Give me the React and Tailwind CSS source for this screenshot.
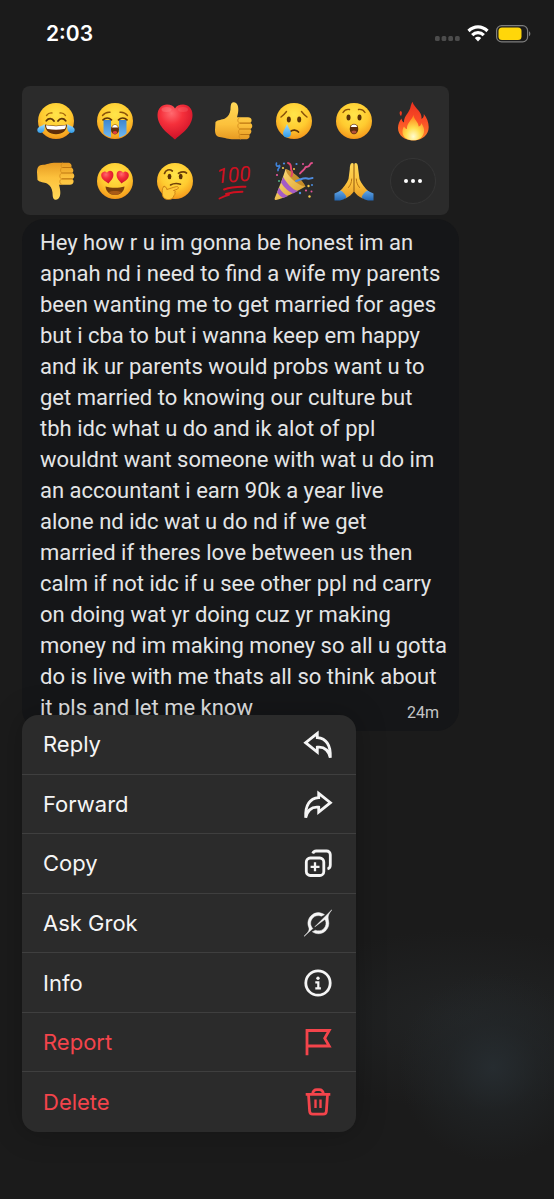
// App.jsx
const MESSAGE_LINES = [
  'Hey how r u im gonna be honest im an',
  'apnah nd i need to find a wife my parents',
  'been wanting me to get married for ages',
  'but i cba to but i wanna keep em happy',
  'and ik ur parents would probs want u to',
  'get married to knowing our culture but',
  'tbh idc what u do and ik alot of ppl',
  'wouldnt want someone with wat u do im',
  'an accountant i earn 90k a year live',
  'alone nd idc wat u do nd if we get',
  'married if theres love between us then',
  'calm if not idc if u see other ppl nd carry',
  'on doing wat yr doing cuz yr making',
  'money nd im making money so all u gotta',
  'do is live with me thats all so think about',
  'it pls and let me know',
];

// Gradients shared by every emoji drawing
function EmojiDefs() {
  return (
    <svg width="0" height="0" className="absolute" aria-hidden="true">
      <defs>
        <radialGradient id="face" cx="0.5" cy="0.32" r="0.72">
          <stop offset="0" stopColor="#ffe54a" />
          <stop offset="0.55" stopColor="#ffcb30" />
          <stop offset="0.88" stopColor="#f6a01f" />
          <stop offset="1" stopColor="#e8860f" />
        </radialGradient>
        <linearGradient id="tear" x1="0" y1="0" x2="0" y2="1">
          <stop offset="0" stopColor="#9fdcff" />
          <stop offset="1" stopColor="#2f9be8" />
        </linearGradient>
        <linearGradient id="stream" x1="0" y1="0" x2="0" y2="1">
          <stop offset="0" stopColor="#3f86cf" />
          <stop offset="1" stopColor="#6fb9f2" />
        </linearGradient>
        <radialGradient id="heart" cx="0.4" cy="0.25" r="0.8">
          <stop offset="0" stopColor="#ff6a6f" />
          <stop offset="0.4" stopColor="#f5303b" />
          <stop offset="1" stopColor="#c90d25" />
        </radialGradient>
        <linearGradient id="hand" x1="0" y1="0" x2="0" y2="1">
          <stop offset="0" stopColor="#ffd858" />
          <stop offset="0.6" stopColor="#fcc13c" />
          <stop offset="1" stopColor="#e69a22" />
        </linearGradient>
        <linearGradient id="flame" x1="0" y1="0" x2="0" y2="1">
          <stop offset="0" stopColor="#e8301f" />
          <stop offset="0.5" stopColor="#fb4d26" />
          <stop offset="1" stopColor="#ff8a2b" />
        </linearGradient>
        <radialGradient id="flameCore" cx="0.5" cy="0.85" r="0.75">
          <stop offset="0" stopColor="#fffbd0" />
          <stop offset="0.45" stopColor="#ffdf4f" />
          <stop offset="1" stopColor="#ff8c22" />
        </radialGradient>
        <linearGradient id="cone" x1="0" y1="0" x2="1" y2="1">
          <stop offset="0" stopColor="#ffe384" />
          <stop offset="1" stopColor="#d99a23" />
        </linearGradient>
        <linearGradient id="sleeve" x1="0" y1="0" x2="0" y2="1">
          <stop offset="0" stopColor="#63a7e8" />
          <stop offset="1" stopColor="#2468b4" />
        </linearGradient>
      </defs>
    </svg>
  );
}

function Emoji({ children }) {
  return (
    <svg viewBox="0 0 40 40" className="w-10 h-10 overflow-visible" fill="none" strokeLinecap="round" strokeLinejoin="round" aria-hidden="true">
      {children}
    </svg>
  );
}

const Face = () => <circle cx="20" cy="20" r="18" fill="url(#face)" />;

const HEART = 'M20 38.500C14 33 2.500 26 2.500 14C2.500 7.500 7 3.500 12 3.500C15.700 3.500 18.700 5 20 7.500C21.300 5 24.300 3.500 28 3.500C33 3.500 37.500 7.500 37.500 14C37.500 26 26 33 20 38.500Z';

function Joy() {
  return (
    <Emoji>
      <Face />
      <path d="M10.500 14.500C12 12.500 14 11.700 16 12M29.500 14.500C28 12.500 26 11.700 24 12" stroke="#a8690c" strokeWidth="1.300" />
      <path d="M10.300 19.800C12.500 17 16 17 18 20M29.700 19.800C27.500 17 24 17 22 20" stroke="#5f3508" strokeWidth="1.800" />
      <path d="M9 23.500C15 25 25 25 31 23.500C31 29.500 26.500 33.300 20 33.300C13.500 33.300 9 29.500 9 23.500Z" fill="#5f2e0b" />
      <path d="M10 24.300C16 25.400 24 25.400 30 24.300C29.800 26.500 29 28 28.300 28C23 29 17 29 11.700 28C11 28 10.200 26.500 10 24.300Z" fill="#fff" />
      <path d="M8.500 23C9.500 28 8 32 4.500 32C1.500 32 0.500 29 2 27C3.500 25 6.500 25 8.500 23Z" fill="url(#tear)" />
      <path d="M31.500 23C30.500 28 32 32 35.500 32C38.500 32 39.500 29 38 27C36.500 25 33.500 25 31.500 23Z" fill="url(#tear)" />
    </Emoji>
  );
}

function Sob() {
  return (
    <Emoji>
      <Face />
      <path d="M8.500 19H16V36.500C13 35.800 10.500 34.300 8.500 32.500Z" fill="url(#stream)" />
      <path d="M31.500 19H24V36.500C27 35.800 29.500 34.300 31.500 32.500Z" fill="url(#stream)" />
      <path d="M7.500 14.500C9.500 12 12 11 15 11.300M32.500 14.500C30.500 12 28 11 25 11.300" stroke="#8a520a" strokeWidth="1.400" />
      <path d="M8 18.800C10.500 16.500 14 16.500 16.500 18.800M32 18.800C29.500 16.500 26 16.500 23.500 18.800" stroke="#5f3508" strokeWidth="1.700" />
      <ellipse cx="20" cy="28.500" rx="4" ry="5" fill="#62300d" />
      <path d="M17 26.500C17.500 24.500 18.700 24 20 24C21.300 24 22.500 24.500 23 26.500Z" fill="#fff" />
      <ellipse cx="20" cy="31.500" rx="2.300" ry="1.500" fill="#df3f3f" />
    </Emoji>
  );
}

function Heart() {
  return (
    <Emoji>
      <path d={HEART} fill="url(#heart)" />
      <ellipse cx="11.500" cy="8.500" rx="5" ry="2.500" fill="#ff9a9a" opacity="0.300" />
      <ellipse cx="28" cy="8.500" rx="5" ry="2.500" fill="#ff9a9a" opacity="0.200" />
    </Emoji>
  );
}

function Thumb() {
  return (
    <>
      <path
        d="M1.500 21C4 18.500 8 19 11 17.500C14.500 15.500 16 12.500 16.500 8.500C16.700 5.500 16.500 1.500 19.500 1.300C23 1 24.500 5 24.300 9C24.200 12 23.500 14.500 23 16.300H34C38.300 16.300 38.500 21.300 36 22C39.300 23 38.800 27.500 36 28C38.300 29.200 37.500 33 35 33.500C36.500 35.500 35 38.300 32 38.300H20C14 38.300 10.500 36.500 7 36.200C3 36 1 34 1 29Z"
        fill="url(#hand)"
      />
      <path d="M26 22.100H36M26 28H36M26 33.500H35" stroke="#bd7611" strokeWidth="1.100" />
      <path d="M26 16.500C23.500 17 22.800 20.500 25.500 22C23 23.500 23.500 27 25.800 28C24 29.500 24.200 32.500 26 33.500C24.500 35 25 37 26.500 38" stroke="#d99220" strokeWidth="1" />
    </>
  );
}

function ThumbsUp() {
  return (
    <Emoji>
      <Thumb />
    </Emoji>
  );
}

function ThumbsDown() {
  return (
    <Emoji>
      <g transform="translate(0 40) scale(1 -1)">
        <Thumb />
      </g>
    </Emoji>
  );
}

function Cry() {
  return (
    <Emoji>
      <Face />
      <path d="M7 16C9 14.500 11 12.500 12.500 10.500M33 16C31 14.500 29 12.500 27.500 10.500" stroke="#8a520a" strokeWidth="1.400" />
      <ellipse cx="14.800" cy="18.500" rx="2" ry="3" fill="#5a3208" />
      <ellipse cx="25.200" cy="18.500" rx="2" ry="3" fill="#5a3208" />
      <path d="M16.500 30.500C18.500 28.500 22.500 28.500 24.500 31" stroke="#5a3208" strokeWidth="1.700" />
      <path d="M13 23C14.500 27 17 29.500 17 32.500C17 35 15.200 36.500 13 36.500C10.800 36.500 9 35 9 32.500C9 29.500 11.500 27 13 23Z" fill="url(#tear)" />
    </Emoji>
  );
}

function Wow() {
  return (
    <Emoji>
      <Face />
      <path d="M9 11.500C10.500 9 13 8 15.500 8.500M31 11.500C29.500 9 27 8 24.500 8.500" stroke="#8a520a" strokeWidth="1.400" />
      <ellipse cx="14.500" cy="16.500" rx="2" ry="3" fill="#5a3208" />
      <ellipse cx="25.500" cy="16.500" rx="2" ry="3" fill="#5a3208" />
      <ellipse cx="20" cy="28" rx="4.300" ry="5.300" fill="#5f2e0b" />
      <path d="M16.900 26C17.300 24 18.500 23.400 20 23.400C21.500 23.400 22.700 24 23.100 26Z" fill="#fff" />
      <ellipse cx="20" cy="31" rx="2.600" ry="1.600" fill="#b0503a" />
    </Emoji>
  );
}

function Fire() {
  return (
    <Emoji>
      <path
        d="M19.500 0.800C20.500 5 25 8 27.500 12.500C28.500 14.500 28.700 16.500 28.500 18C30.500 17 31 15 30.800 13C34 17 35.700 21.500 35.700 26C35.700 34 29 39.500 20.500 39.500C11.500 39.500 5 34.500 5 27C5 23 6.500 20 8.500 17.500C8.800 19.500 9.500 20.700 11 21.500C10.500 15 17 11 17.500 6C18 4 18.500 2.500 19.500 0.800Z"
        fill="url(#flame)"
      />
      <path d="M7.500 10C9.500 10.500 9 13 8 15C6.500 14 6 11 7.500 10Z" fill="#ef3a22" />
      <path
        d="M20.500 14C20.500 18 25.500 21 25.700 25.500C27.500 25 28.300 23.500 28.300 22C30.500 25.500 31.500 28 31 31C30 36.500 26 39.300 20.500 39.300C14.500 39.300 9.800 36.500 9.500 31.500C9.300 29 10 27 11 25.500C11.800 27 12.500 27.700 14 28C13.500 22 19 19 20.500 14Z"
        fill="url(#flameCore)"
      />
    </Emoji>
  );
}

function HeartEyes() {
  return (
    <Emoji>
      <Face />
      <g transform="rotate(-8 12.500 15.500) translate(5.500 9) scale(0.350)">
        <path d={HEART} fill="url(#heart)" />
      </g>
      <g transform="rotate(8 27.500 15.500) translate(20.500 9) scale(0.350)">
        <path d={HEART} fill="url(#heart)" />
      </g>
      <path d="M10.500 25.500C16 27.300 24 27.300 29.500 25.500C29 31 25 34 20 34C15 34 11 31 10.500 25.500Z" fill="#7a400c" />
      <path d="M13.500 31C17 29.500 23 29.500 26.500 31C24.500 33 22.500 34 20 34C17.500 34 15.500 33 13.500 31Z" fill="#a95a16" />
    </Emoji>
  );
}

function Thinking() {
  return (
    <Emoji>
      <Face />
      <path d="M9.500 12.500C10.500 9 14.500 7.500 17.300 10M23.500 12.300C26 11 29.500 10.500 31.500 12" stroke="#70420a" strokeWidth="1.700" />
      <ellipse cx="14.500" cy="15.500" rx="1.900" ry="2.700" fill="#5a3208" />
      <ellipse cx="25.700" cy="15.500" rx="1.900" ry="2.700" fill="#5a3208" />
      <path d="M15.500 24C18 22.500 22.500 22.200 25.500 23.200" stroke="#70420a" strokeWidth="1.500" />
      <path
        d="M9 25.500C10.500 25.300 11.500 26.500 11.800 28.500C14 28 18 26.300 21.500 25.600C23.800 25.300 24 27.500 22 28.300L18.500 29.500C20.500 29.500 20.500 31 19.800 31.500C20.500 33 19.500 34 19 34.500C18.500 37.500 15.500 39 12.500 38.500C8.500 38 7 35 7.300 31.500C7.400 29 7 26 9 25.500Z"
        fill="#ffc93a"
        stroke="#c77d14"
        strokeWidth="0.900"
      />
    </Emoji>
  );
}

function Hundred() {
  return (
    <Emoji>
      <text
        x="20"
        y="21"
        textAnchor="middle"
        fontSize="21"
        fontStyle="italic"
        fill="#cf1020"
        fontFamily="Roboto, sans-serif"
        transform="rotate(-4 20 20)"
      >
        100
      </text>
      <path d="M10 28.500C16 26.300 24 25.500 31.500 25.800M12 33C17 31.500 23 30.800 28.500 30.800M5.500 37.500C9 35.800 12 34.500 15 33.800" stroke="#cf1020" strokeWidth="1.900" />
    </Emoji>
  );
}

function Party() {
  return (
    <Emoji>
      <path d="M11.500 8C18 10 28 18 31.500 25.500C24 30 9 37.500 2 39C0.500 39.300 0.300 38 1 36.500C4.500 28 9 17 11.500 8Z" fill="url(#cone)" />
      <path d="M9.300 16C12 21.500 18.500 29 24 30L19 32.500C14 30.500 9.500 25.500 7 21.500ZM5 26.500C7.500 30.500 11 34 14 35L9.500 37C7 36 4.500 33.500 3 31.500Z" fill="#a45cc5" />
      <path d="M11.500 8C18 10 28 18 31.500 25.500C24 25 12.500 14.500 11.500 8Z" fill="#b87a1c" opacity="0.700" />
      <path d="M14 2C19 3 15.500 8 18 10.500C19 12 17.500 14 17.500 15" stroke="#e2456b" strokeWidth="2" />
      <path d="M26 12.500C28.500 9 30.500 9 31 7C31.500 5 34 6.500 35 5C36.500 3.500 36 2 38 2" stroke="#e0508a" strokeWidth="1.900" />
      <path d="M22 20C27 18.500 30 16 33.500 17.500C35.500 18.300 37 17 38.500 17" stroke="#4f8de0" strokeWidth="2" />
      <path d="M2.500 2C1.500 5 3.500 6 5.500 4.500C7 7 3 7 4 9.500" stroke="#3f82d8" strokeWidth="1.700" />
      <g fill="#f2c94c">
        <circle cx="9" cy="7" r="1.100" />
        <circle cx="20" cy="8" r="1" />
        <circle cx="34.500" cy="25" r="1.200" />
        <circle cx="35.500" cy="35.500" r="1.200" />
      </g>
      <g fill="#4b8fe2">
        <circle cx="10" cy="2.500" r="1.100" />
        <circle cx="22.500" cy="3" r="1.100" />
        <circle cx="26" cy="32" r="1.200" />
        <circle cx="38" cy="24" r="1" />
      </g>
      <g fill="#e5549a">
        <circle cx="3" cy="14" r="1.100" />
        <circle cx="32" cy="29.500" r="1.100" />
        <circle cx="29" cy="3" r="1" />
        <circle cx="37.500" cy="30.500" r="1" />
      </g>
      <circle cx="5" cy="20" r="1" fill="#52b788" />
    </Emoji>
  );
}

function Pray() {
  return (
    <Emoji>
      <path d="M18.300 2C16.300 2 16 5 15.800 8L14.500 18C13 22 9 27 5.500 30.500L11.500 37.500C15 35.500 18 33.500 19.800 30.500V4C19.800 2.700 19.300 2 18.300 2Z" fill="url(#hand)" />
      <path d="M21.700 2C23.700 2 24 5 24.200 8L25.500 18C27 22 31 27 34.500 30.500L28.500 37.500C25 35.500 22 33.500 20.200 30.500V4C20.200 2.700 20.700 2 21.700 2Z" fill="url(#hand)" />
      <path d="M20 3.500V30.500M17.700 18C17.500 22 16.500 24 14.500 26.500M22.300 18C22.500 22 23.500 24 25.500 26.500" stroke="#b87414" strokeWidth="1" />
      <path d="M0.500 32.500C3 31.500 5 30.500 6.500 29.500C9.500 31 11.500 33.500 12.500 36.500C10.500 38 8 39 6 39.500H0.500Z" fill="url(#sleeve)" />
      <path d="M39.500 32.500C37 31.500 35 30.500 33.500 29.500C30.500 31 28.500 33.500 27.500 36.500C29.500 38 32 39 34 39.500H39.500Z" fill="url(#sleeve)" />
    </Emoji>
  );
}

const REACTIONS = [
  { label: 'Tears of joy', Icon: Joy },
  { label: 'Crying loudly', Icon: Sob },
  { label: 'Heart', Icon: Heart },
  { label: 'Thumbs up', Icon: ThumbsUp },
  { label: 'Crying', Icon: Cry },
  { label: 'Surprised', Icon: Wow },
  { label: 'Fire', Icon: Fire },
  { label: 'Thumbs down', Icon: ThumbsDown },
  { label: 'Heart eyes', Icon: HeartEyes },
  { label: 'Thinking', Icon: Thinking },
  { label: 'Hundred', Icon: Hundred },
  { label: 'Party', Icon: Party },
  { label: 'Folded hands', Icon: Pray },
];

function MenuIcon({ children }) {
  return (
    <svg viewBox="0 0 32 32" className="w-8 h-8" fill="none" stroke="currentColor" strokeWidth="2.800" aria-hidden="true">
      {children}
    </svg>
  );
}

const ARROW = 'M15.300 5.300L3.600 14.700L15.300 24V19.200C21.500 18.500 26.300 21 28.300 29.800C28.800 18 24.500 10.500 15.300 9.700Z';

const ReplyIcon = () => (
  <MenuIcon>
    <path d={ARROW} />
  </MenuIcon>
);

const ForwardIcon = () => (
  <MenuIcon>
    <path d={ARROW} transform="translate(32 0) scale(-1 1)" />
  </MenuIcon>
);

const CopyIcon = () => (
  <MenuIcon>
    <rect x="4.300" y="11" width="17.500" height="17.500" rx="4" />
    <path d="M10.800 6.500C11.300 4.800 12.600 4 14.300 4H24.500C26.700 4 28.300 5.600 28.300 7.800V18C28.300 20 27.300 21.500 25.500 22" />
    <path d="M13 15.300V24.200M8.600 19.800H17.500" strokeWidth="2.300" />
  </MenuIcon>
);

const GrokIcon = () => (
  <svg viewBox="0 0 24 24" className="w-7 h-7 mx-[2px]" fill="currentColor" stroke="currentColor" strokeWidth="0.400" aria-hidden="true">
    <path d="M9.270 15.290l7.978-5.897c.391-.29.95-.177 1.137.272.98 2.369.542 5.215-1.410 7.169-1.951 1.954-4.667 2.382-7.149 1.406l-2.711 1.257c3.889 2.661 8.611 2.003 11.562-.953 2.341-2.344 3.066-5.539 2.388-8.420l.006.007c-.983-4.232.242-5.924 2.750-9.383.060-.082.120-.164.179-.248l-3.301 3.305v-.010L9.267 15.292M7.623 16.723c-2.792-2.670-2.310-6.801.071-9.184 1.761-1.763 4.647-2.483 7.166-1.425l2.705-1.250a7.808 7.808 0 00-1.829-1A8.975 8.975 0 005.984 5.830c-2.533 2.536-3.330 6.436-1.962 9.764 1.022 2.487-.653 4.246-2.340 6.022-.599.630-1.199 1.259-1.682 1.925l7.620-6.815" />
  </svg>
);

const InfoIcon = () => (
  <MenuIcon>
    <circle cx="16" cy="16" r="12.200" />
    <circle cx="16" cy="11.300" r="1.700" fill="currentColor" stroke="none" />
    <path d="M13.300 15.300H16.300V21.300M13.300 21.300H18.900" strokeWidth="2.200" />
  </MenuIcon>
);

const FlagIcon = () => (
  <MenuIcon>
    <path d="M5 29.300V4.500H27.200L22.700 12.300L27.200 20H5" />
  </MenuIcon>
);

const TrashIcon = () => (
  <MenuIcon>
    <path d="M3.700 8.300H28.300M10.600 8C11 5 12.500 3.700 14.800 3.700H17.200C19.500 3.700 21 5 21.400 8" />
    <path d="M6.500 8.500L7.600 25C7.700 27 9 28.200 10.900 28.200H21.100C23 28.200 24.300 27 24.400 25L25.500 8.500" />
    <path d="M13.500 13.500V22M18.500 13.500V22" strokeWidth="2.400" />
  </MenuIcon>
);

const MENU_ITEMS = [
  { label: 'Reply', Icon: ReplyIcon },
  { label: 'Forward', Icon: ForwardIcon },
  { label: 'Copy', Icon: CopyIcon },
  { label: 'Ask Grok', Icon: GrokIcon },
  { label: 'Info', Icon: InfoIcon },
  { label: 'Report', Icon: FlagIcon, danger: true },
  { label: 'Delete', Icon: TrashIcon, danger: true },
];

function StatusBar() {
  return (
    <header className="flex items-center justify-between h-[68px] pl-[46px] pr-[23px]">
      <time className="text-[21px] leading-7 font-semibold text-white">2:03</time>
      <div className="flex items-center gap-[7px]">
        <svg viewBox="0 0 25 18" className="w-[25px] h-[18px]" fill="#4c4c4c" aria-hidden="true">
          <rect x="0" y="11" width="4.700" height="5" rx="1.500" />
          <rect x="6.600" y="11" width="4.700" height="5" rx="1.500" />
          <rect x="13.300" y="11" width="4.700" height="5" rx="1.500" />
          <rect x="20" y="11" width="4.700" height="5" rx="1.500" />
        </svg>
        <svg viewBox="0 0 22 18" className="w-[22px] h-[18px]" fill="none" stroke="#fff" strokeWidth="3.200" aria-hidden="true">
          <path d="M1.500 6C7 0.600 15 0.600 20.500 6" />
          <path d="M5.200 10.100C8.500 6.800 13.500 6.800 16.800 10.100" />
          <path d="M7.800 13C9.500 11.300 12.500 11.300 14.200 13L11 16.600Z" fill="#fff" stroke="none" />
        </svg>
        <svg viewBox="0 0 35 18" className="w-[35px] h-[18px]" fill="none" aria-hidden="true">
          <rect x="0.600" y="0.600" width="31" height="16.300" rx="5" stroke="#7d7d7d" strokeWidth="1.200" />
          <rect x="2.500" y="2.500" width="23" height="12.500" rx="3.500" fill="#ffd60a" />
          <path d="M33 6.300C34.800 7 34.800 10.500 33 11.200Z" fill="#7d7d7d" />
        </svg>
      </div>
    </header>
  );
}

function ReactionPicker() {
  return (
    <div className="grid grid-cols-7 auto-rows-[59px] gap-y-px w-full max-w-[427px] py-[5px] pl-1 pr-[6px] bg-[#2b2b2b] rounded-lg">
      {REACTIONS.map(({ label, Icon }) => (
        <button key={label} type="button" aria-label={label} className="flex items-center justify-center">
          <Icon />
        </button>
      ))}
      <button type="button" aria-label="More reactions" className="flex items-center justify-center">
        <span className="flex items-center justify-center gap-[3px] w-[46px] h-[46px] rounded-full border border-[#363636] bg-[#282828]">
          <span className="w-1 h-1 rounded-full bg-white" />
          <span className="w-1 h-1 rounded-full bg-white" />
          <span className="w-1 h-1 rounded-full bg-white" />
        </span>
      </button>
    </div>
  );
}

function MessageBubble() {
  return (
    <article className="w-full max-w-[437px] mt-1 pl-[18px] pr-5 py-2 bg-[#151618] rounded-[22px] font-['Roboto',sans-serif] text-[#e4e5e6]">
      <div className="flex items-end">
        <p className="flex-1 min-w-0 text-[22px] leading-[31px] whitespace-nowrap">
          {MESSAGE_LINES.map((line) => (
            <span key={line} className="block">
              {line}
            </span>
          ))}
        </p>
        <time className="-ml-8 text-base leading-5 text-[#c4c5c6]">24m</time>
      </div>
    </article>
  );
}

function ContextMenu() {
  return (
    <ul className="relative grid auto-rows-fr w-full max-w-[334px] min-h-[417px] -mt-4 overflow-hidden bg-[#2b2b2b] rounded-2xl shadow-[0_0_30px_rgba(0,0,0,0.25)] divide-y divide-[#3f3f3f]">
      {MENU_ITEMS.map(({ label, Icon, danger }) => (
        <li key={label} className="flex">
          <button
            type="button"
            className={`flex flex-1 items-center justify-between pl-[21px] pr-[22px] text-[22px] leading-7 ${danger ? 'text-[#f4444b]' : 'text-[#f5f5f5]'}`}
          >
            {label}
            <Icon />
          </button>
        </li>
      ))}
    </ul>
  );
}

export default function App() {
  return (
    <div className="min-h-screen bg-[#1b1b1b] bg-[radial-gradient(circle_at_89%_89%,#262c30_0px,#23282b80_45px,transparent_95px),radial-gradient(ellipse_200px_90px_at_84%_85%,#222425,transparent)] font-['Inter',sans-serif]">
      <EmojiDefs />
      <StatusBar />
      <main className="pt-[18px] px-[22px] pb-16">
        <ReactionPicker />
        <MessageBubble />
        <ContextMenu />
      </main>
    </div>
  );
}
